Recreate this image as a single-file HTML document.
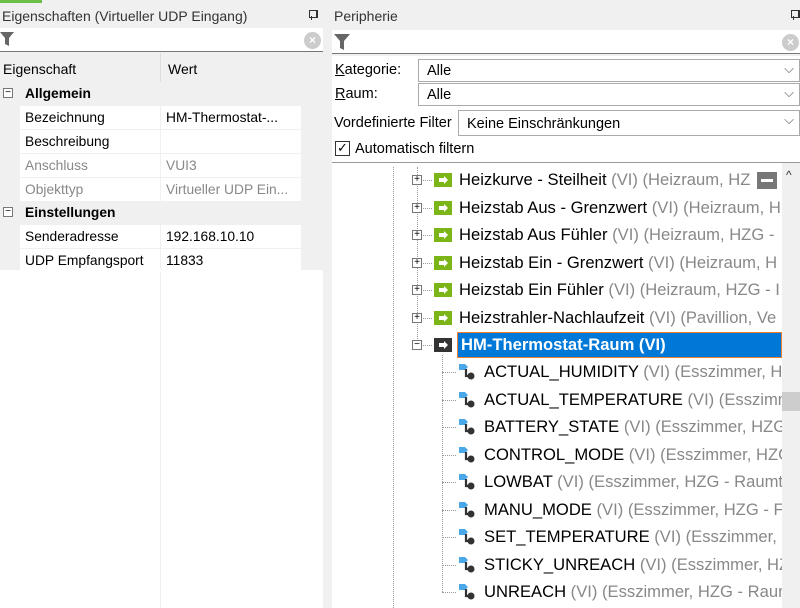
<!DOCTYPE html>
<html><head><meta charset="utf-8"><style>
*{margin:0;padding:0;box-sizing:border-box}
body{width:800px;height:608px;overflow:hidden;background:#f0f0f0;font-family:"Liberation Sans","DejaVu Sans",sans-serif;color:#000;position:relative}
.a{position:absolute;white-space:nowrap}
.t14{font-size:14px}
.g{color:#888}
.row{position:absolute;left:0;width:323px;height:24px;font-size:13.8px}
.row .k{position:absolute;left:20px;top:0;width:140px;height:23px;background:#fff;padding:4px 0 0 5px}
.row .v{position:absolute;left:161px;top:0;width:140px;height:23px;background:#fff;padding:4px 0 0 5px;overflow:hidden}
.grp{position:absolute;left:0;width:323px;height:24px;font-size:13.8px;font-weight:bold}
.box{position:absolute;width:10px;height:10px;border:1px solid #777;background:#fff;font-size:10px;line-height:8px;text-align:center;font-weight:normal;color:#000}
.tr{position:absolute;font-size:16.6px;white-space:nowrap}
.ic{position:absolute;width:18px;height:14px;background:#7cb518}
.ic:after{content:"";position:absolute;left:5px;top:5px;width:5px;height:4px;background:#fff}
.ic:before{content:"";position:absolute;left:10px;top:3px;border-left:4px solid #fff;border-top:4px solid transparent;border-bottom:4px solid transparent}
.hd{position:absolute;left:417px;width:15px;border-top:1px dotted #999}
.hc{position:absolute;left:442px;width:14px;border-top:1px dotted #999}
.ci{position:absolute;width:18px;height:18px}
.dd{position:absolute;background:#fff;border:1px solid #aaa;height:23px;font-size:14.5px;padding:3px 0 0 8px}
.dd:after{content:"⌵";position:absolute;right:5px;top:1px;color:#555;font-size:13px}
.pin{position:absolute;width:8px;height:10px}
.pin:before{content:"";position:absolute;left:1px;top:0;width:6px;height:6px;border:1px solid #333;border-right-width:2px}
.pin:after{content:"";position:absolute;left:3px;top:6px;width:1px;height:4px;background:#333}
</style></head><body>
<div class="a" style="left:0;top:0;width:42px;height:3px;background:#6cc04a"></div>
<!-- left panel -->
<div class="a t14" style="left:2px;top:8px;color:#333">Eigenschaften (Virtueller UDP Eingang)</div>
<div class="pin" style="left:308px;top:10px"></div>
<div class="a" style="left:0;top:28px;width:323px;height:24px;background:#fff;border-bottom:1px solid #777"></div>
<svg class="a" style="left:0;top:31px" width="14" height="16"><path d="M0 1h14l-5 6v8l-4-2v-6z" fill="#666"/></svg>
<div class="a" style="left:304px;top:32px;width:17px;height:17px;border-radius:50%;background:#ccc;color:#fff;font-size:12px;text-align:center;line-height:17px;font-weight:bold">×</div>
<div class="a" style="left:0;top:53px;width:323px;height:29px;background:#f0f0f0"></div>
<div class="a t14" style="left:3px;top:61px">Eigenschaft</div>
<div class="a" style="left:160px;top:53px;height:29px;border-left:1px solid #ddd"></div>
<div class="a t14" style="left:168px;top:61px">Wert</div>
<div class="a" style="left:0;top:82px;width:323px;height:526px;background:#fff"></div>
<div class="a" style="left:0;top:82px;width:323px;height:188px;background:#f0f0f0"></div>
<div class="grp" style="top:82px"><div class="box" style="left:3px;top:6px">−</div><span class="a" style="left:25px;top:4px">Allgemein</span></div>
<div class="row" style="top:106px"><div class="k">Bezeichnung</div><div class="v">HM-Thermostat-...</div></div>
<div class="row" style="top:130px"><div class="k">Beschreibung</div><div class="v"></div></div>
<div class="row g" style="top:154px"><div class="k">Anschluss</div><div class="v">VUI3</div></div>
<div class="row g" style="top:178px"><div class="k">Objekttyp</div><div class="v">Virtueller UDP Ein...</div></div>
<div class="grp" style="top:201px"><div class="box" style="left:3px;top:6px">−</div><span class="a" style="left:25px;top:4px">Einstellungen</span></div>
<div class="row" style="top:225px"><div class="k">Senderadresse</div><div class="v">192.168.10.10</div></div>
<div class="row" style="top:249px"><div class="k">UDP Empfangsport</div><div class="v">11833</div></div>
<div class="a" style="left:160px;top:272px;width:141px;height:336px;border-left:1px solid #eee"></div>
<div class="a" style="left:323px;top:0;width:7px;height:608px;background:#f0f0f0"></div>
<!-- right panel -->
<div class="a t14" style="left:334px;top:8px;color:#333">Peripherie</div>
<div class="pin" style="left:790px;top:10px"></div>
<div class="a" style="left:332px;top:30px;width:468px;height:24px;background:#fff;border-bottom:1px solid #777"></div>
<svg class="a" style="left:334px;top:33px" width="16" height="18"><path d="M0 1h16l-6 7v9l-4-2v-7z" fill="#666"/></svg>
<div class="a" style="left:782px;top:34px;width:17px;height:17px;border-radius:50%;background:#ccc;color:#fff;font-size:12px;text-align:center;line-height:17px;font-weight:bold">×</div>
<div class="a" style="left:332px;top:56px;width:468px;height:107px;background:#fff"></div>
<div class="a" style="left:335px;top:62px;font-size:14.5px"><u>K</u>ategorie:</div>
<div class="dd" style="left:418px;top:59px;width:382px">Alle</div>
<div class="a" style="left:335px;top:86px;font-size:14.5px"><u>R</u>aum:</div>
<div class="dd" style="left:418px;top:83px;width:382px">Alle</div>
<div class="a" style="left:334px;top:115px;font-size:14.5px">Vordefinierte Filter</div>
<div class="dd" style="left:458px;top:110px;width:342px;height:26px;padding-top:5px">Keine Einschränkungen</div>
<div class="a" style="left:335px;top:141px;width:15px;height:15px;border:1px solid #333;background:#fff;font-size:13px;line-height:12px;text-align:center">✓</div>
<div class="a" style="left:355px;top:141px;font-size:14.5px">Automatisch filtern</div>
<div class="a" style="left:332px;top:162px;width:468px;height:1px;background:#999"></div>
<div class="a" style="left:332px;top:163px;width:450px;height:445px;background:#fff"></div>
<div class="a" style="left:393px;top:167px;height:441px;border-left:1px dotted #999"></div>
<div class="a" style="left:417px;top:167px;height:178px;border-left:1px dotted #999"></div>
<div class="a" style="left:442px;top:355px;height:237px;border-left:1px dotted #999"></div>

<div class="hd" style="top:180px"></div><div class="box" style="left:412px;top:175px">+</div><div class="ic" style="left:434px;top:173px"></div>
<div class="tr" style="left:459px;top:170px">Heizkurve - Steilheit <span class="g">(VI) (Heizraum, HZ</span></div>
<div class="hd" style="top:208px"></div><div class="box" style="left:412px;top:203px">+</div><div class="ic" style="left:434px;top:201px"></div>
<div class="tr" style="left:459px;top:198px">Heizstab Aus - Grenzwert <span class="g">(VI) (Heizraum, H</span></div>
<div class="hd" style="top:235px"></div><div class="box" style="left:412px;top:230px">+</div><div class="ic" style="left:434px;top:228px"></div>
<div class="tr" style="left:459px;top:225px">Heizstab Aus Fühler <span class="g">(VI) (Heizraum, HZG -</span></div>
<div class="hd" style="top:263px"></div><div class="box" style="left:412px;top:258px">+</div><div class="ic" style="left:434px;top:256px"></div>
<div class="tr" style="left:459px;top:253px">Heizstab Ein - Grenzwert <span class="g">(VI) (Heizraum, H</span></div>
<div class="hd" style="top:290px"></div><div class="box" style="left:412px;top:285px">+</div><div class="ic" style="left:434px;top:283px"></div>
<div class="tr" style="left:459px;top:280px">Heizstab Ein Fühler <span class="g">(VI) (Heizraum, HZG - I</span></div>
<div class="hd" style="top:318px"></div><div class="box" style="left:412px;top:313px">+</div><div class="ic" style="left:434px;top:311px"></div>
<div class="tr" style="left:459px;top:308px">Heizstrahler-Nachlaufzeit <span class="g">(VI) (Pavillion, Ve</span></div>
<div class="hd" style="top:345px"></div><div class="box" style="left:412px;top:340px">−</div><div class="ic" style="left:434px;top:338px;background:#333"></div>
<div class="a" style="left:457px;top:332px;width:325px;height:26px;background:#0078d7;border:1px solid #f08030"></div>
<div class="tr" style="left:461px;top:335px;color:#fff;font-weight:bold">HM-Thermostat-Raum (VI)</div>

<svg width="0" height="0" style="position:absolute"><defs><g id="c"><path d="M1 1h6l3 3-3 3H1z" fill="#4aa8e8"/><path d="M8 6v7h4" stroke="#333" stroke-width="2.2" fill="none"/><circle cx="13" cy="13" r="3.5" fill="#333"/></g></defs></svg>
<div class="hc" style="top:372px"></div><svg class="ci" style="left:458px;top:363px"><use href="#c"/></svg><div class="tr" style="left:484px;top:362px">ACTUAL_HUMIDITY <span class="g">(VI) (Esszimmer, H.</span></div>
<div class="hc" style="top:400px"></div><svg class="ci" style="left:458px;top:391px"><use href="#c"/></svg><div class="tr" style="left:484px;top:390px">ACTUAL_TEMPERATURE <span class="g">(VI) (Esszimme</span></div>
<div class="hc" style="top:427px"></div><svg class="ci" style="left:458px;top:418px"><use href="#c"/></svg><div class="tr" style="left:484px;top:417px">BATTERY_STATE <span class="g">(VI) (Esszimmer, HZG -</span></div>
<div class="hc" style="top:455px"></div><svg class="ci" style="left:458px;top:446px"><use href="#c"/></svg><div class="tr" style="left:484px;top:445px">CONTROL_MODE <span class="g">(VI) (Esszimmer, HZC</span></div>
<div class="hc" style="top:482px"></div><svg class="ci" style="left:458px;top:473px"><use href="#c"/></svg><div class="tr" style="left:484px;top:472px">LOWBAT <span class="g">(VI) (Esszimmer, HZG - Raumt</span></div>
<div class="hc" style="top:510px"></div><svg class="ci" style="left:458px;top:501px"><use href="#c"/></svg><div class="tr" style="left:484px;top:500px">MANU_MODE <span class="g">(VI) (Esszimmer, HZG - F</span></div>
<div class="hc" style="top:537px"></div><svg class="ci" style="left:458px;top:528px"><use href="#c"/></svg><div class="tr" style="left:484px;top:527px">SET_TEMPERATURE <span class="g">(VI) (Esszimmer, HZ</span></div>
<div class="hc" style="top:565px"></div><svg class="ci" style="left:458px;top:556px"><use href="#c"/></svg><div class="tr" style="left:484px;top:555px">STICKY_UNREACH <span class="g">(VI) (Esszimmer, HZC</span></div>
<div class="hc" style="top:592px"></div><svg class="ci" style="left:458px;top:583px"><use href="#c"/></svg><div class="tr" style="left:484px;top:582px">UNREACH <span class="g">(VI) (Esszimmer, HZG - Raum</span></div>
<!-- scrollbar -->
<div class="a" style="left:782px;top:163px;width:18px;height:445px;background:#f0f0f0"></div>
<div class="a" style="left:782px;top:392px;width:18px;height:19px;background:#cdcdcd"></div>
<div class="a" style="left:786px;top:168px;font-size:12px;color:#333">^</div>
<div class="a" style="left:757px;top:172px;width:20px;height:17px;background:#777"><div style="position:absolute;left:4px;top:7px;width:12px;height:3px;background:#fff"></div></div>
</body></html>
